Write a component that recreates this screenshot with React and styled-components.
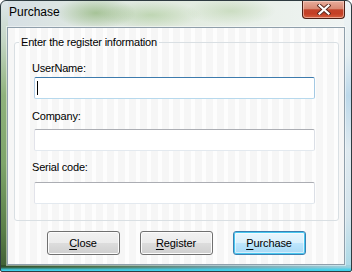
import React from "react";
import styled, { createGlobalStyle } from "styled-components";

const Global = createGlobalStyle`
  html, body { margin: 0; padding: 0; background: #ffffff; }
  body { font-family: "Liberation Sans", Arial, sans-serif; }
`;

const Window = styled.div`
  box-sizing: border-box;
  width: 352px;
  height: 272px;
  border: 1px solid #2e3b40;
  border-radius: 6px 6px 2px 2px;
  display: flex;
  flex-direction: column;
  padding: 0 6px 6px 6px;
  overflow: hidden;
  background:
    linear-gradient(to top, #3fd0ea 0px, #3fd0ea 1px, rgba(63, 208, 234, 0) 4px) left bottom / 100% 6px no-repeat,
    linear-gradient(to right, #2f4f2a 0%, #4d6f48 25%, #6f9aa0 60%, #9fd2e0 100%) left bottom / 100% 6px no-repeat,
    linear-gradient(to bottom, #dfe7ea 0%, #c4d6c4 15%, #8fb27c 35%, #7ea56a 60%, #5a7f48 85%, #3e5d33 100%) left top / 7px 100% no-repeat,
    linear-gradient(to bottom, #eef3f4 0%, #e4eef2 20%, #bcd8ea 35%, #dfeaf0 55%, #d4e4ec 80%, #a8d8e6 100%) right top / 7px 100% no-repeat,
    radial-gradient(ellipse 40px 16px at 95px 12px, rgba(120, 165, 90, 0.55), rgba(120, 165, 90, 0)),
    radial-gradient(ellipse 50px 14px at 150px 14px, rgba(150, 190, 125, 0.45), rgba(150, 190, 125, 0)),
    radial-gradient(ellipse 45px 14px at 230px 10px, rgba(170, 200, 150, 0.45), rgba(170, 200, 150, 0)),
    linear-gradient(to right, #d6dfe5 0%, #dde6e2 20%, #e2ebe0 50%, #e9f0ea 75%, #f0f4f4 100%);
`;

const TitleBar = styled.div`
  height: 26px;
  display: flex;
  justify-content: space-between;
  align-items: flex-start;
  flex: none;
`;

const Title = styled.div`
  padding: 4px 0 0 2px;
  font-family: "Liberation Sans", Arial, sans-serif;
  font-size: 12px;
  line-height: 15px;
  color: #000000;
`;

const CloseButton = styled.div`
  box-sizing: border-box;
  width: 43px;
  height: 18px;
  border: 1px solid #4b2016;
  border-top: none;
  border-radius: 0 0 4px 4px;
  display: flex;
  align-items: center;
  justify-content: center;
  background: linear-gradient(
    to bottom,
    #e8ad9c 0%,
    #d98a74 45%,
    #c2432a 52%,
    #c43f25 75%,
    #d4603f 100%
  );
  box-shadow: inset 0 0 0 1px rgba(255, 220, 210, 0.55);
`;

const Client = styled.div`
  flex: 1;
  display: flex;
  flex-direction: column;
  border: 1px solid #8f9fab;
  box-shadow: 0 0 0 1px rgba(255, 255, 255, 0.45);
  background: repeating-linear-gradient(
    to right,
    #f6f6f6 0px,
    #f6f6f6 7px,
    #fdfdfd 7px,
    #fdfdfd 11px
  );
`;

const Group = styled.fieldset`
  margin: 8px 5px 0 6px;
  padding: 0;
  border: 1px solid #d9dfe3;
  border-radius: 3px;
  min-width: 0;
`;

const Legend = styled.legend`
  margin-left: 4px;
  padding: 0 2px;
  font-size: 11px;
  line-height: 13px;
  letter-spacing: -0.2px;
  color: #000000;
`;

const GroupBody = styled.div`
  padding: 0 0 16px 17px;
  display: flex;
  flex-direction: column;
  align-items: flex-start;
`;

const Label = styled.div`
  margin-top: ${(p) => p.$top}px;
  margin-bottom: ${(p) => p.$gap}px;
  font-size: 11px;
  line-height: 13px;
  letter-spacing: -0.2px;
  color: #000000;
`;

const TextBox = styled.div`
  box-sizing: border-box;
  width: 281px;
  height: 22px;
  margin-left: 2px;
  background: #ffffff;
  border: 1px solid;
  border-radius: 2px;
  border-color: ${(p) =>
    p.$focused ? "#3d7bad #a4c9e3 #b7d9ed #b5cfe7" : "#abadb3 #dbdfe6 #e3e9ef #e2e3ea"};
  display: flex;
  align-items: center;
`;

const Caret = styled.span`
  width: 1px;
  height: 14px;
  margin-left: 2px;
  background: #000000;
`;

const ButtonRow = styled.div`
  margin-top: 10px;
  display: flex;
  justify-content: center;
  gap: 20px;
`;

const Button = styled.div`
  box-sizing: border-box;
  width: 73px;
  height: 24px;
  border: 1px solid ${(p) => (p.$default ? "#3c7fb1" : "#707070")};
  border-radius: 3px;
  display: flex;
  align-items: center;
  justify-content: center;
  font-size: 11px;
  letter-spacing: -0.1px;
  color: #000000;
  background: ${(p) =>
    p.$default
      ? "linear-gradient(to bottom, #eaf6fd 0%, #d9f0fc 50%, #bee6fd 50%, #a7d9f5 100%)"
      : "linear-gradient(to bottom, #f2f2f2 0%, #ebebeb 50%, #dddddd 50%, #cfcfcf 100%)"};
  box-shadow: ${(p) =>
    p.$default
      ? "inset 0 0 0 1px #48c8f0, inset 0 0 0 2px rgba(255,255,255,0.5)"
      : "inset 0 0 0 1px #fcfcfc"};
`;

const Key = styled.span`
  text-decoration: underline;
  text-underline-offset: 2px;
`;

function CloseGlyph() {
  return (
    <svg width="14" height="11" viewBox="0 0 14 11">
      <path d="M2.5 1.5 L11.5 9.5 M11.5 1.5 L2.5 9.5" stroke="#5a2a20" strokeWidth="4" strokeLinecap="square" />
      <path d="M2.5 1.5 L11.5 9.5 M11.5 1.5 L2.5 9.5" stroke="#ffffff" strokeWidth="2.2" strokeLinecap="square" />
    </svg>
  );
}

export default function App() {
  return (
    <>
      <Global />
      <Window>
        <TitleBar>
          <Title>Purchase</Title>
          <CloseButton>
            <CloseGlyph />
          </CloseButton>
        </TitleBar>
        <Client>
          <Group>
            <Legend>Enter the register information</Legend>
            <GroupBody>
              <Label $top={13} $gap={2}>UserName:</Label>
              <TextBox $focused>
                <Caret />
              </TextBox>
              <Label $top={11} $gap={6}>Company:</Label>
              <TextBox />
              <Label $top={10} $gap={8}>Serial code:</Label>
              <TextBox />
            </GroupBody>
          </Group>
          <ButtonRow>
            <Button>
              <span><Key>C</Key>lose</span>
            </Button>
            <Button>
              <span><Key>R</Key>egister</span>
            </Button>
            <Button $default>
              <span><Key>P</Key>urchase</span>
            </Button>
          </ButtonRow>
        </Client>
      </Window>
    </>
  );
}
